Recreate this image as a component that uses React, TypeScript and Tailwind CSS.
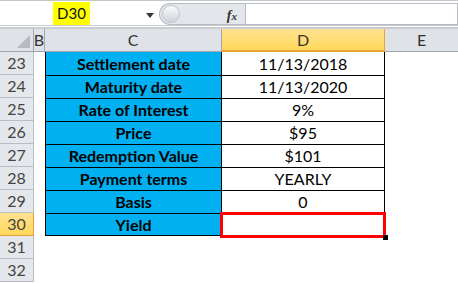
import React from 'react';

const rows = [
  { n: 23, label: 'Settlement date', value: '11/13/2018' },
  { n: 24, label: 'Maturity date', value: '11/13/2020' },
  { n: 25, label: 'Rate of Interest', value: '9%' },
  { n: 26, label: 'Price', value: '$95' },
  { n: 27, label: 'Redemption Value', value: '$101' },
  { n: 28, label: 'Payment terms', value: 'YEARLY' },
  { n: 29, label: 'Basis', value: '0' },
  { n: 30, label: 'Yield', value: '' },
  { n: 31 },
  { n: 32 },
];

const font = { fontFamily: 'Lato, "Open Sans", sans-serif' };

function FormulaBar() {
  return (
    <div className="h-[29px] bg-white border-t border-[#c3c7cc] flex flex-col">
      <div className="h-[24px] flex items-stretch">
        {/* Name box */}
        <div className="w-[159px] flex items-center relative">
          <div className="ml-[53px] mt-[1px] w-[37px] h-[23px] bg-[#ffff00] flex items-center justify-center text-[15px] text-[#111]">
            D30
          </div>
          <svg className="absolute left-[146px] top-[12px]" width="8" height="5" viewBox="0 0 8 5">
            <path d="M0 0 H8 L4 5 Z" fill="#3a3a3a" />
          </svg>
        </div>
        {/* Buttons area */}
        <div className="w-[86px] mt-[2px] bg-[#e3e6ea] rounded-l-full border border-r-0 border-[#b8bcc2] flex items-center relative">
          <div className="ml-[2px] w-[18px] h-[18px] rounded-full bg-gradient-to-b from-[#fafafa] to-[#cfd3d8] border border-[#c0c4ca]" />
          <span
            className="absolute right-[8px] top-[1px] text-[14px] italic font-bold text-[#333]"
            style={{ fontFamily: '"Liberation Serif", serif' }}
          >
            f<span className="text-[11px]">x</span>
          </span>
        </div>
        {/* Formula input */}
        <div className="flex-1 mt-[2px] bg-white border border-[#b8bcc2]" />
      </div>
      <div className="h-[1px] bg-[#c9ccd1]" />
      <div className="h-[1px] bg-white" />
      <div className="h-[2px] bg-[#c9ccd1]" />
    </div>
  );
}

export default function App() {
  return (
    <div className="w-[458px] h-[283px] overflow-hidden bg-white" style={font}>
      <FormulaBar />
      <div className="grid grid-cols-[34px_11px_177px_163px_1fr]">
        {/* Column header row */}
        <div className="h-[23px] bg-[#dfe3e8] border-r border-b border-[#9ea7b2] relative">
          <svg className="absolute right-[3px] bottom-[3px]" width="13" height="13" viewBox="0 0 13 13">
            <path d="M13 0 V13 H0 Z" fill="#b5bac1" />
          </svg>
        </div>
        <div className="h-[23px] bg-[#dfe3e8] border-r border-b border-[#9ea7b2] flex items-center justify-center text-[16px] text-[#333]">
          B
        </div>
        <div className="h-[23px] bg-[#dfe3e8] border-r border-b border-[#9ea7b2] flex items-center justify-center text-[16px] text-[#333]">
          C
        </div>
        <div className="h-[23px] bg-gradient-to-b from-[#ffe28f] to-[#ffd858] border-r border-b-2 border-[#e8a53a] flex items-center justify-center text-[16px] text-[#333]">
          D
        </div>
        <div className="h-[23px] bg-[#dfe3e8] border-b border-[#9ea7b2] flex items-center justify-center text-[16px] text-[#333]">
          E
        </div>

        {rows.map((r) => {
          const sel = r.n === 30;
          const inTable = r.label !== undefined;
          return (
            <React.Fragment key={r.n}>
              <div
                className={`h-[23px] flex items-center justify-center text-[16px] text-[#444] border-r border-b ${
                  sel
                    ? 'bg-gradient-to-b from-[#ffe28f] to-[#ffd858] border-[#e0a13a]'
                    : 'bg-[#e4e7eb] border-[#b9bec5]'
                }`}
              >
                {r.n}
              </div>
              <div className="h-[23px] bg-white" />
              {inTable ? (
                <div
                  className={`h-[23px] bg-[#00b0f0] border-l border-r border-black flex items-center justify-center text-[16px] font-bold text-black ${
                    r.n === 23 ? 'border-t-0' : 'border-t'
                  } ${r.n === 30 ? 'border-b' : ''}`}
                >
                  {r.label}
                </div>
              ) : (
                <div className="h-[23px] bg-white" />
              )}
              {inTable ? (
                <div
                  className={`h-[23px] bg-white border-r border-black flex items-center justify-center text-[16px] text-black relative ${
                    r.n === 23 ? '' : 'border-t'
                  }`}
                >
                  {r.value}
                  {sel && (
                    <>
                      <div className="absolute left-[-2px] top-[-2px] right-[-2px] bottom-[-2px] border-[3px] border-[#ff0000]" />
                      <div className="absolute right-[-4px] bottom-[-4px] w-[5px] h-[5px] bg-black" />
                    </>
                  )}
                </div>
              ) : (
                <div className="h-[23px] bg-white" />
              )}
              <div className="h-[23px] bg-white" />
            </React.Fragment>
          );
        })}
      </div>
    </div>
  );
}
